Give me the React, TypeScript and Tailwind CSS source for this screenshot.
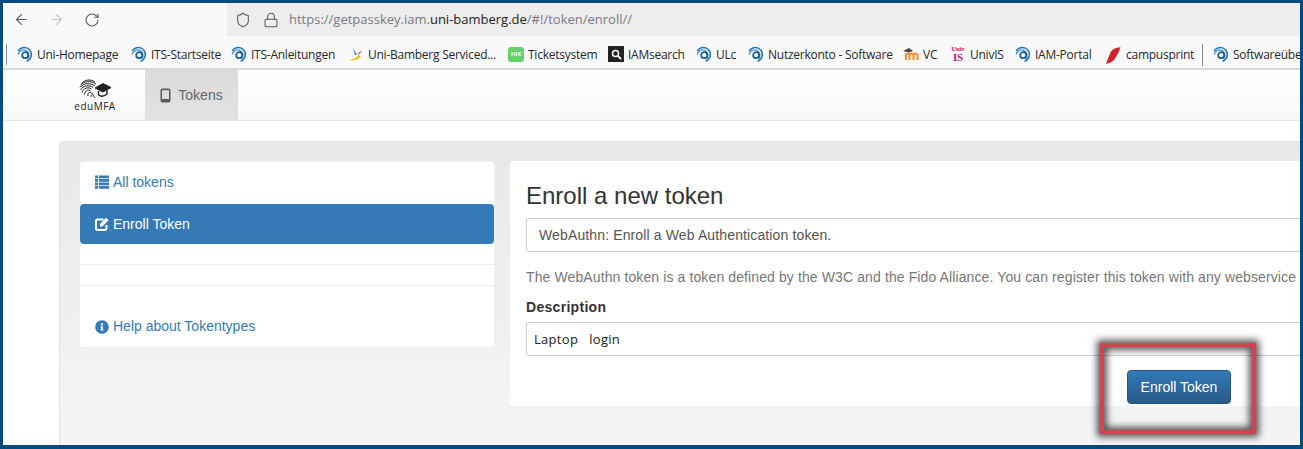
import React from 'react';
import { ArrowLeft, ArrowRight, RotateCw, Shield, Lock } from 'lucide-react';
import { FaInfoCircle } from 'react-icons/fa';

const Spiral = () => (
  <svg width="16" height="16" viewBox="0 0 16 16" fill="none" className="shrink-0">
    <path d="M1.2 5.2A7 7 0 1 1 9.5 15.2" stroke="#2a78ad" strokeWidth="1.5" />
    <path d="M1.2 8.6A5.4 5.4 0 1 1 10.5 13" stroke="#4a9ccf" strokeWidth="1.4" />
    <circle cx="8.2" cy="9.2" r="3" stroke="#1b5c8c" strokeWidth="1.7" />
  </svg>
);

const Dart = () => (
  <svg width="16" height="16" viewBox="0 0 16 16" className="shrink-0">
    <path d="M1 14C5 13 9 12 11 8L13 11C10 14 5 15 1 14Z" fill="#f2c230" />
    <path d="M5 2L9 9L7 9Z" fill="#3f7fc4" />
    <path d="M14 4L12 8L9 8Z" fill="#e0707a" />
  </svg>
);

const Hix = () => (
  <span className="flex h-[15px] w-4 shrink-0 items-center justify-center rounded-[3px] bg-[#66d06c] text-[6px] font-bold text-white">HIX</span>
);

const Search = () => (
  <span className="flex h-4 w-4 shrink-0 items-center justify-center bg-[#222222]">
    <svg width="11" height="11" viewBox="0 0 11 11" fill="none">
      <circle cx="4.5" cy="4.5" r="3" stroke="white" strokeWidth="1.5" />
      <path d="M7 7L10 10" stroke="white" strokeWidth="1.8" />
    </svg>
  </span>
);

const Moodle = () => (
  <svg width="16" height="14" viewBox="0 0 16 14" className="shrink-0">
    <path d="M0 4L6 1L10 4L6 5.5Z" fill="#4a4a4a" />
    <path d="M3 13V8C3 6 6 6 6.5 8V13M6.5 8C7 6 10 6 10.5 8V13" stroke="#f0932b" strokeWidth="2.2" fill="none" />
    <path d="M10.5 8C11 6 14 6 14.5 8V13" stroke="#f0932b" strokeWidth="2.2" fill="none" />
  </svg>
);

const UnivIs = () => (
  <span className="flex w-4 shrink-0 flex-col items-center font-['Liberation_Serif',serif] leading-none font-bold text-[#b5217f]">
    <span className="text-[7px] leading-[7px]">Univ</span>
    <span className="text-[11px] leading-[9px]">IS</span>
  </span>
);

const Quill = () => (
  <svg width="16" height="18" viewBox="0 0 16 18" className="shrink-0">
    <path d="M15.5 1C11 2 6 3 5 8L2 15L1 18C5 17 9 15 11 11C13 8 14.5 4 15.5 1Z" fill="#cf2228" />
  </svg>
);

const bookmarks: { label: string; icon: React.ReactNode; width: string }[] = [
  { label: 'Uni-Homepage', icon: <Spiral />, width: 'w-[114px]' },
  { label: 'ITS-Startseite', icon: <Spiral />, width: 'w-[100px]' },
  { label: 'ITS-Anleitungen', icon: <Spiral />, width: 'w-[117px]' },
  { label: 'Uni-Bamberg Serviced...', icon: <Dart />, width: 'w-[160px]' },
  { label: 'Ticketsystem', icon: <Hix />, width: 'w-[100px]' },
  { label: 'IAMsearch', icon: <Search />, width: 'w-[88px]' },
  { label: 'ULc', icon: <Spiral />, width: 'w-[52px]' },
  { label: 'Nutzerkonto - Software', icon: <Spiral />, width: 'w-[155px]' },
  { label: 'VC', icon: <Moodle />, width: 'w-[47px]' },
  { label: 'UnivIS', icon: <UnivIs />, width: 'w-[65px]' },
  { label: 'IAM-Portal', icon: <Spiral />, width: 'w-[90px]' },
];

const Logo = () => (
  <div className="flex w-[142px] flex-col items-center justify-center pl-[42px]">
    <svg width="33" height="20" viewBox="0 0 33 20" fill="none" stroke="#222222" strokeWidth="1">
      <path d="M3 4C6 0.5 12 0 16 3" />
      <path d="M1.5 6C5 2 12 1.5 17 5" />
      <path d="M1 8.5C4 4 11 3.5 16 7" />
      <path d="M1.5 11C4 6.5 10 5.5 14 8.5" />
      <path d="M3 13.5C4.5 9 9 7.5 12.5 10" />
      <path d="M5.5 15.5C6 11.5 9 10 11.5 12" />
      <path d="M9 17C8.5 14 10.5 12.5 12.5 14C14 15 14 17 16 19" />
      <path d="M12 18C11.5 16.5 12 16 13 17" />
      <path d="M16 9L24 4.5L32 8.5L24 13Z" fill="#222222" stroke="#222222" />
      <path d="M19.5 12V16C22 18 25 17.5 28 15V11" strokeWidth="1.4" />
    </svg>
    <span className="mt-[2px] font-['Open_Sans',sans-serif] text-[10px] leading-[11px] font-medium tracking-[0.5px] text-[#222222]">eduMFA</span>
  </div>
);

const PhoneIcon = () => (
  <svg width="11" height="15" viewBox="0 0 11 15" className="shrink-0">
    <rect x="0.5" y="0.5" width="10" height="14" rx="2" fill="#5a5a5a" />
    <rect x="2" y="2.2" width="7" height="8.8" fill="#dcdcdc" />
  </svg>
);

const ListIcon = () => (
  <svg width="14" height="14" viewBox="0 0 14 14" fill="#337ab7" className="shrink-0">
    <path d="M0 0.5H3V3.3H0ZM4 0.5H14V3.3H4ZM0 4H3V6.8H0ZM4 4H14V6.8H4ZM0 7.5H3V10.3H0ZM4 7.5H14V10.3H4ZM0 11H3V13.8H0ZM4 11H14V13.8H4Z" />
  </svg>
);

const EditIcon = () => (
  <svg width="14" height="14" viewBox="0 0 14 14" fill="none" className="shrink-0">
    <path d="M11.5 8V10.8C11.5 12 10.6 13 9.5 13H2.5C1.4 13 1 12 1 10.8V4.5C1 3.4 1.4 2.5 2.5 2.5H8.5" stroke="white" strokeWidth="2" />
    <path d="M5 7L11 0.8L13.6 3.2L7.4 9.4H5Z" fill="white" />
  </svg>
);

export default function App() {
  return (
    <div className="relative flex h-[449px] w-[1303px] flex-col overflow-hidden border-x-[3px] border-t-[3px] border-b-[4px] border-[#004a80] bg-white font-['Liberation_Sans',sans-serif] text-sm">
      {/* browser toolbar */}
      <div className="flex h-[33px] shrink-0 items-center bg-[#f9f9fb]">
        <div className="flex w-[224px] items-center pl-[10px] text-[#5b5b66]">
          <ArrowLeft size={17} strokeWidth={1.6} />
          <ArrowRight size={17} strokeWidth={1.6} className="ml-[18px] text-[#c4c4c8]" />
          <RotateCw size={16} strokeWidth={1.6} className="ml-[19px]" />
        </div>
        <div className="flex h-full flex-1 items-center bg-[#ededf0] pl-[8px] font-['Open_Sans',sans-serif] text-[13px] text-[#7a7a80]">
          <Shield size={16} strokeWidth={1.6} className="text-[#5b5b66]" />
          <Lock size={16} strokeWidth={1.6} className="ml-[12px] text-[#5b5b66]" />
          <span className="ml-[10px]">
            https://getpasskey.iam.<span className="text-[#1f1f22]">uni-bamberg.de</span>/#!/token/enroll//
          </span>
        </div>
      </div>

      {/* bookmarks */}
      <div className="flex h-[34px] shrink-0 items-center overflow-hidden border-b-2 border-[#d8d8dc] bg-[#f9f9fb] pt-[5px] pl-[3px] font-['Open_Sans',sans-serif] text-[12px] tracking-[-0.25px] whitespace-nowrap text-[#26262b]">
        <div className="mr-[10px] h-[21px] w-px shrink-0 bg-[#8a8a8f]" />
        {bookmarks.map((b) => (
          <div key={b.label} className={`flex shrink-0 items-center gap-[4px] ${b.width}`}>
            {b.icon}
            <span>{b.label}</span>
          </div>
        ))}
        <div className="flex w-[97px] shrink-0 items-center gap-[5px]">
          <Quill />
          <span>campusprint</span>
        </div>
        <div className="mr-[10px] h-[22px] w-px shrink-0 bg-[#8a8a8f]" />
        <div className="flex shrink-0 items-center gap-[4px]">
          <Spiral />
          <span>Softwareübe</span>
        </div>
      </div>

      {/* app nav */}
      <div className="flex h-[51px] shrink-0 border-b border-[#e7e7e7] bg-gradient-to-b from-white to-[#f8f8f8]">
        <Logo />
        <div className="flex w-[93px] items-center justify-center gap-[7px] bg-gradient-to-b from-[#dbdbdb] to-[#e2e2e2] text-[#666666]">
          <PhoneIcon />
          <span>Tokens</span>
        </div>
      </div>

      {/* page */}
      <div className="flex flex-1 pt-[20px] pl-[56px]">
        <div className="flex flex-1 gap-[15px] rounded-tl-[4px] border-t border-l border-[#e3e3e3] bg-gradient-to-b from-[#e8e8e8] to-[#f5f5f5] pt-[19px] pl-[19px]">
          <div className="flex h-[187px] w-[416px] flex-col rounded-[4px] border border-[#eeeeee] bg-white">
            <div className="flex h-[42px] items-center gap-[4px] pb-[2px] pl-[15px] text-[#337ab7]">
              <ListIcon />
              <span>All tokens</span>
            </div>
            <div className="flex h-[40px] items-center gap-[4px] rounded-[4px] bg-[#337ab7] pl-[15px] text-white">
              <EditIcon />
              <span>Enroll Token</span>
            </div>
            <div className="mt-[20px] h-[22px] border-y border-[#eeeeee]" />
            <div className="flex flex-1 items-end gap-[4px] pb-[11px] pl-[15px] text-[#337ab7]">
              <FaInfoCircle size={14} className="mb-[2px]" />
              <span>Help about Tokentypes</span>
            </div>
          </div>

          <div className="flex h-[245px] flex-1 flex-col rounded-l-[4px] bg-white pt-[20px] pl-[16px] text-[#333333]">
            <h2 className="text-[24px] leading-[30px] font-normal">Enroll a new token</h2>
            <div className="mt-[7px] flex h-[34px] items-center rounded-l-[4px] border-y border-l border-[#cccccc] pl-[12px] tracking-[0.13px] text-[#555555]">
              WebAuthn: Enroll a Web Authentication token.
            </div>
            <p className="mt-[15px] h-[20px] overflow-hidden leading-[20px] tracking-[0.11px] whitespace-nowrap text-[#777777]">
              The WebAuthn token is a token defined by the W3C and the Fido Alliance. You can register this token with any webservice
            </p>
            <label className="mt-[10px] leading-[20px] font-bold tracking-[0.3px]">Description</label>
            <div className="mt-[5px] flex h-[34px] items-center rounded-l-[4px] border-y border-l border-[#cccccc] pl-[7px] font-['Open_Sans',sans-serif] text-[13px] tracking-[0.3px] whitespace-pre text-[#222222]">
              Laptop   login
            </div>
            <div className="mt-[14px] flex justify-end pr-[69px]">
              <button className="h-[34px] w-[104px] rounded-[4px] border border-[#245580] bg-gradient-to-b from-[#337ab7] to-[#265a88] text-white">
                Enroll Token
              </button>
            </div>
          </div>
        </div>
      </div>

      {/* red highlight round the button */}
      <div className="absolute top-[340px] left-[1097px] h-[91px] w-[156px] border-[4px] border-[#d2434f] shadow-[0_0_7px_3px_rgba(30,30,30,0.75),inset_0_0_7px_3px_rgba(30,30,30,0.75)]" />
    </div>
  );
}
